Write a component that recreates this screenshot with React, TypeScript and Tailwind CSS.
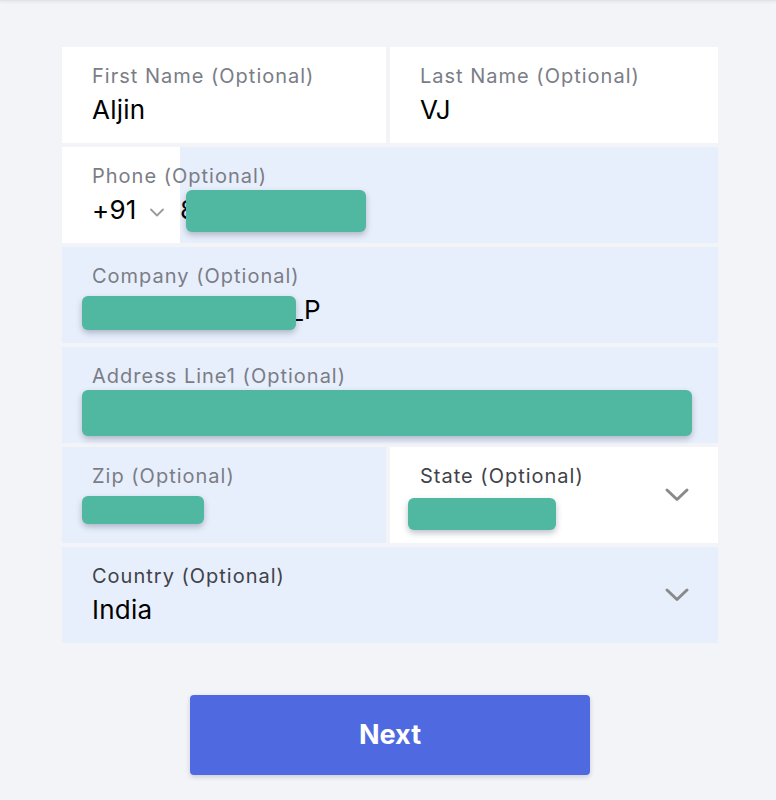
import React from 'react';

const font = { fontFamily: 'Inter, "Noto Sans", sans-serif' };

const Redact: React.FC<{ className: string }> = ({ className }) => (
  <div className={`absolute bg-[#50b7a1] rounded-[6px] shadow-[0_3px_6px_rgba(40,50,80,0.3)] ${className}`} />
);

const Chevron: React.FC = () => (
  <svg width="26" height="16" viewBox="0 0 26 16" fill="none" className="shrink-0">
    <path d="M3 3l10 9.5L23 3" stroke="#8a8a8a" strokeWidth="3" strokeLinecap="round" strokeLinejoin="round" />
  </svg>
);

const labelCls = 'text-[20px] leading-[24px] tracking-[0.05em]';
const valueCls = 'text-[26px] leading-[30px] tracking-[0.01em] text-black';

const Field: React.FC<{
  label: string;
  value?: string;
  bg?: string;
  dark?: boolean;
  select?: boolean;
  children?: React.ReactNode;
}> = ({ label, value, bg = 'bg-white', dark, select, children }) => (
  <div className={`relative h-[96px] flex items-center pl-[30px] pr-[28px] ${bg}`}>
    <div className="flex-1 self-start pt-[17px]">
      <div className={`${labelCls} ${dark ? 'text-[#3f4249]' : 'text-[#7a7d86]'}`}>{label}</div>
      <div className={`mt-[7px] ${valueCls}`}>{value}&nbsp;</div>
    </div>
    {select && <Chevron />}
    {children}
  </div>
);

export default function App() {
  return (
    <div className="min-h-[800px] bg-[#f3f4f8] relative" style={font}>
      <div className="h-[1px] w-full bg-[#e2e3e8] shadow-[0_1px_3px_rgba(0,0,0,0.12)]" />
      <div className="pt-[46px] px-[62px] flex flex-col gap-[4px] w-[780px]">
        <div className="grid grid-cols-[324px_328px] gap-[4px]">
          <Field label="First Name (Optional)" value="Aljin" />
          <Field label="Last Name (Optional)" value="VJ" />
        </div>

        <div className="relative h-[96px] flex bg-[#e8effc]">
          <div className="w-[118px] bg-white pl-[30px] pt-[48px] flex items-start">
            <span className={valueCls}>+91</span>
            <svg width="18" height="12" viewBox="0 0 18 12" fill="none" className="ml-[12px] mt-[12px]">
              <path d="M2 2.5l6 6 6-6" stroke="#9a9a9a" strokeWidth="1.8" strokeLinecap="round" strokeLinejoin="round" />
            </svg>
          </div>
          <div className="flex-1 pt-[48px]">
            <span className={valueCls}>8</span>
          </div>
          <div className={`absolute left-[30px] top-[17px] text-[#7a7d86] ${labelCls}`}>Phone (Optional)</div>
          <Redact className="left-[124px] top-[43px] w-[180px] h-[42px]" />
        </div>

        <Field label="Company (Optional)" bg="bg-[#e8effc]">
          <div className={`absolute left-[229px] top-[48px] ${valueCls}`}>_P</div>
          <Redact className="left-[20px] top-[49px] w-[214px] h-[34px]" />
        </Field>

        <Field label="Address Line1 (Optional)" bg="bg-[#e8effc]">
          <Redact className="left-[20px] top-[43px] w-[610px] h-[46px]" />
        </Field>

        <div className="grid grid-cols-[324px_328px] gap-[4px]">
          <Field label="Zip (Optional)" bg="bg-[#e8effc]">
            <Redact className="left-[20px] top-[49px] w-[122px] h-[28px]" />
          </Field>
          <Field label="State (Optional)" dark select>
            <Redact className="left-[18px] top-[51px] w-[148px] h-[32px]" />
          </Field>
        </div>

        <Field label="Country (Optional)" value="India" bg="bg-[#e8effc]" dark select />
      </div>

      <div className="flex justify-center pt-[52px] pl-[4px]">
        <button className="w-[400px] h-[80px] rounded-[4px] bg-[#4f6ae0] text-white text-[27px] font-bold shadow-[0_2px_5px_rgba(30,40,90,0.2)]">
          Next
        </button>
      </div>
    </div>
  );
}
